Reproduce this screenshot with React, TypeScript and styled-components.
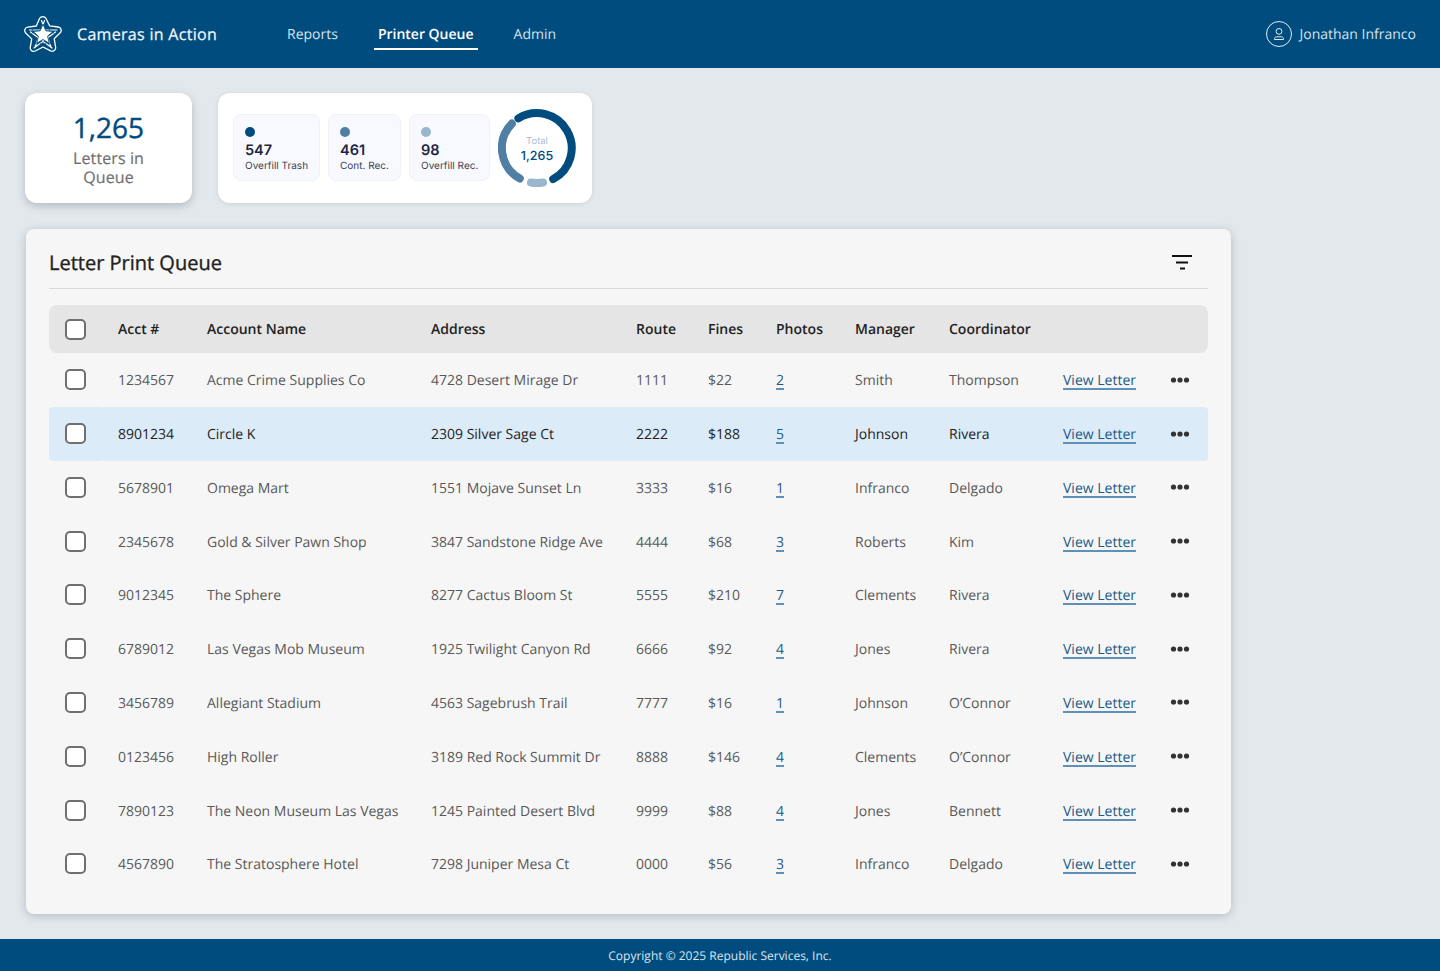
import React from "react";
import styled, { createGlobalStyle } from "styled-components";

const Global = createGlobalStyle`
  html, body { margin: 0; padding: 0; }
  body {
    background: #e3e8ec;
    font-family: "Open Sans", "Liberation Sans", sans-serif;
    color: #222;
    text-rendering: geometricPrecision;
  }
  * { box-sizing: border-box; }
`;

const Page = styled.div`
  display: flex;
  flex-direction: column;
  min-height: 100vh;
`;

const NavBar = styled.header`
  height: 68px;
  background: #004c7e;
  display: flex;
  align-items: center;
  padding: 0 24px;
  color: #fff;
`;

const Brand = styled.div`
  display: flex;
  align-items: center;
  gap: 15px;
  width: 259px;
  font-size: 16px;
  font-weight: 400;
  letter-spacing: 0.3px;
  -webkit-text-stroke: 0.25px #f1f5f8;
  color: #f1f5f8;
`;

const Tabs = styled.nav`
  display: flex;
  align-items: center;
  gap: 32px;
  height: 68px;
  flex: 1;
`;

const Tab = styled.a<{ $active?: boolean }>`
  height: 31px;
  padding: 2px 4px 0;
  margin-top: 1px;
  display: flex;
  align-items: center;
  font-size: 14px;
  font-weight: ${(p) => (p.$active ? 600 : 400)};
  color: ${(p) => (p.$active ? "#fff" : "#d5e2ec")};
  border-bottom: 2px solid ${(p) => (p.$active ? "#fff" : "transparent")};
`;

const UserBox = styled.div`
  display: flex;
  align-items: center;
  gap: 7px;
  font-size: 14px;
  color: #d5e2ec;
`;

const Main = styled.main`
  flex: 1;
  padding: 25px 0 25px 25px;
  display: flex;
  flex-direction: column;
  gap: 26px;
`;

const StatsRow = styled.section`
  display: flex;
  gap: 26px;
  align-items: stretch;
  height: 110px;
`;

const KpiCard = styled.div`
  width: 167px;
  background: #fff;
  border-radius: 12px;
  box-shadow: 0 3px 9px rgba(40, 60, 80, 0.26);
  display: flex;
  flex-direction: column;
  align-items: center;
  justify-content: center;
  text-align: center;
  padding-bottom: 2px;
`;

const KpiValue = styled.div`
  font-size: 28px;
  line-height: 34px;
  font-weight: 400;
  -webkit-text-stroke: 0.4px #004c7e;
  color: #004c7e;
`;

const KpiLabel = styled.div`
  width: 90px;
  font-size: 16px;
  line-height: 19px;
  margin-top: 4px;
  margin-bottom: -3px;
  letter-spacing: 0.1px;
  -webkit-text-stroke: 0.2px #717171;
  color: #717171;
`;

const DonutCard = styled.div`
  width: 374px;
  background: #fff;
  border-radius: 12px;
  box-shadow: 0 1px 4px rgba(40, 60, 80, 0.12);
  display: flex;
  align-items: center;
  gap: 8px;
  padding: 0 15px;
  font-family: Inter, "Liberation Sans", sans-serif;
`;

const MiniCard = styled.div<{ $width: number }>`
  width: ${(p) => p.$width}px;
  height: 67px;
  margin-bottom: 1px;
  background: #f8f9fe;
  border: 1px solid #f0f2f8;
  border-radius: 8px;
  padding: 12px 0 0 11px;
`;

const Dot = styled.div<{ $color: string }>`
  width: 10px;
  height: 10px;
  border-radius: 50%;
  background: ${(p) => p.$color};
`;

const MiniValue = styled.div`
  font-size: 14.5px;
  line-height: 18px;
  margin-top: 5px;
  margin-bottom: -1px;
  font-weight: 600;
  color: #1e2640;
`;

const MiniLabel = styled.div`
  font-size: 10px;
  line-height: 14px;
  color: #3b4254;
  white-space: nowrap;
`;

const DonutWrap = styled.div`
  position: relative;
  width: 78px;
  height: 78px;
`;

const DonutCenter = styled.div`
  position: absolute;
  inset: 0;
  display: flex;
  flex-direction: column;
  align-items: center;
  justify-content: center;
  padding-top: 5px;
`;

const DonutCaption = styled.div`
  font-size: 9.5px;
  line-height: 12px;
  margin-bottom: 1px;
  color: #a9c0d3;
`;

const DonutTotal = styled.div`
  font-size: 12.5px;
  line-height: 16px;
  font-weight: 500;
  color: #004c7e;
`;

const TableCard = styled.section`
  width: 1205px;
  margin-left: 1px;
  height: 685px;
  background: #f6f6f6;
  border-radius: 8px;
  box-shadow: 0 2px 10px rgba(40, 60, 80, 0.26);
  padding: 0 23px;
`;

const TitleBar = styled.div`
  height: 60px;
  display: flex;
  align-items: center;
  justify-content: space-between;
  border-bottom: 1px solid #d9d9d9;
  padding: 8px 16px 0 0;
  margin-bottom: 16px;
`;

const Title = styled.h2`
  margin: 0;
  font-size: 20px;
  font-weight: 400;
  -webkit-text-stroke: 0.35px #222;
  color: #222;
`;

const cols = "16px 89px 224px 205px 72px 68px 79px 94px 114px 107px 1fr";

const HeaderRow = styled.div`
  height: 48px;
  background: #e5e5e5;
  border-radius: 8px;
  display: flex;
`;

const Row = styled.div`
  height: 53.78px;
  display: flex;
`;

const CheckCell = styled.div<{ $hl?: boolean }>`
  width: 53px;
  display: flex;
  align-items: center;
  justify-content: flex-end;
  padding-right: 16px;
  background: ${(p) => (p.$hl ? "#dcebf8" : "transparent")};
  border-radius: 4px 2px 2px 4px;
`;

const Cells = styled.div<{ $hl?: boolean }>`
  flex: 1;
  display: grid;
  grid-template-columns: ${cols};
  align-items: center;
  padding-top: 2px;
  background: ${(p) => (p.$hl ? "#dcebf8" : "transparent")};
  border-radius: 2px 4px 4px 2px;
  font-size: 14px;
  color: ${(p) => (p.$hl ? "#222" : "#595959")};
  white-space: nowrap;
`;

const HeadCells = styled(Cells)`
  padding-top: 0;
  font-weight: 600;
  color: #222;
`;

const Box = styled.span`
  width: 21px;
  height: 21px;
  border: 2px solid #6f6f6f;
  border-radius: 5px;
  background: #fff;
  display: block;
`;

const LinkText = styled.a`
  color: #1b5a88;
  text-decoration: underline;
  text-decoration-color: #5f90b8;
  text-decoration-thickness: 1.5px;
  text-underline-offset: 2.5px;
`;

const DotsCell = styled.span`
  display: flex;
  margin-top: -2px;
`;

const Footer = styled.footer`
  height: 32px;
  background: #004c7e;
  color: #dce6ee;
  font-size: 12px;
  display: flex;
  align-items: center;
  justify-content: center;
`;

const rows = [
  ["1234567", "Acme Crime Supplies Co", "4728 Desert Mirage Dr", "1111", "$22", "2", "Smith", "Thompson"],
  ["8901234", "Circle K", "2309 Silver Sage Ct", "2222", "$188", "5", "Johnson", "Rivera"],
  ["5678901", "Omega Mart", "1551 Mojave Sunset Ln", "3333", "$16", "1", "Infranco", "Delgado"],
  ["2345678", "Gold & Silver Pawn Shop", "3847 Sandstone Ridge Ave", "4444", "$68", "3", "Roberts", "Kim"],
  ["9012345", "The Sphere", "8277 Cactus Bloom St", "5555", "$210", "7", "Clements", "Rivera"],
  ["6789012", "Las Vegas Mob Museum", "1925 Twilight Canyon Rd", "6666", "$92", "4", "Jones", "Rivera"],
  ["3456789", "Allegiant Stadium", "4563 Sagebrush Trail", "7777", "$16", "1", "Johnson", "O’Connor"],
  ["0123456", "High Roller", "3189 Red Rock Summit Dr", "8888", "$146", "4", "Clements", "O’Connor"],
  ["7890123", "The Neon Museum Las Vegas", "1245 Painted Desert Blvd", "9999", "$88", "4", "Jones", "Bennett"],
  ["4567890", "The Stratosphere Hotel", "7298 Juniper Mesa Ct", "0000", "$56", "3", "Infranco", "Delgado"],
];

const heads = ["Acct #", "Account Name", "Address", "Route", "Fines", "Photos", "Manager", "Coordinator"];

const Logo = () => (
  <svg width="38" height="38" viewBox="0 0 38 38" fill="none">
    <path
      d="M15.5 3.5c1.5-2.6 5-2.6 6.5 0l3.6 7.3 8.6 1.2c3 .5 3.9 3.7 2 5.8l-6 5.9 1.4 8.3c.5 3-2.4 5-5 3.8L19 32l-7.7 4c-2.6 1.2-5.5-.8-5-3.8l1.4-8.3-6-5.9c-1.9-2.1-1-5.3 2-5.8l8.6-1.2z"
      stroke="#fff"
      strokeWidth="1.3"
      strokeLinejoin="round"
    />
    <path
      d="M17.5 5.5 27 32M10 33 31.5 17M33 15H5.5M28 33 6.5 17M20.5 5.5 11 32"
      stroke="#fff"
      strokeWidth="1.2"
      strokeLinecap="round"
      strokeDasharray="7 1.5"
    />
    <path
      d="M19 8l3.2 7.4 8 .7-6.1 5.3 1.9 7.9-7-4.2-7 4.2 1.9-7.9-6.1-5.3 8-.7z"
      fill="#fff"
      stroke="#004c7e"
      strokeWidth="1"
      transform="translate(1.9 1.95) scale(0.9)"
    />
  </svg>
);

const UserIcon = () => (
  <svg width="26" height="26" viewBox="0 0 26 26" fill="none" stroke="#e4edf3" strokeWidth="1">
    <circle cx="13" cy="13" r="12.5" />
    <circle cx="13" cy="10.4" r="2.9" />
    <path d="M8.5 18.5v-.8c0-1 .9-1.9 2-1.9h5c1.1 0 2 .9 2 1.9v.8z" strokeLinejoin="round" />
  </svg>
);

const FilterIcon = () => (
  <svg width="20" height="16" viewBox="0 0 20 16" fill="#111">
    <rect x="0" y="0" width="20" height="2" />
    <rect x="4" y="6.5" width="12" height="2" />
    <rect x="8" y="12.5" width="5" height="2" />
  </svg>
);

const DotsIcon = () => (
  <svg width="20" height="6" viewBox="0 0 20 6" fill="#333">
    <circle cx="3.5" cy="3" r="2.6" />
    <circle cx="10" cy="3" r="2.6" />
    <circle cx="16.5" cy="3" r="2.6" />
  </svg>
);

const Donut = () => (
  <svg width="78" height="78" viewBox="0 0 78 78" fill="none" strokeWidth="8" strokeLinecap="round">
    <path d="M20.4 9.3A35 35 0 1 1 55.2 70" stroke="#004c7e" />
    <path d="M21.8 69.6A35 35 0 0 1 13.9 14.6" stroke="#4f7fa3" />
    <path d="M45 73.5A35 35 0 0 1 33 73.5" stroke="#99b7cc" />
  </svg>
);

export default function App() {
  return (
    <Page>
      <Global />
      <NavBar>
        <Brand>
          <Logo />
          Cameras in Action
        </Brand>
        <Tabs>
          <Tab>Reports</Tab>
          <Tab $active>Printer Queue</Tab>
          <Tab>Admin</Tab>
        </Tabs>
        <UserBox>
          <UserIcon />
          Jonathan Infranco
        </UserBox>
      </NavBar>
      <Main>
        <StatsRow>
          <KpiCard>
            <KpiValue>1,265</KpiValue>
            <KpiLabel>Letters in Queue</KpiLabel>
          </KpiCard>
          <DonutCard>
            <MiniCard $width={87}>
              <Dot $color="#004c7e" />
              <MiniValue>547</MiniValue>
              <MiniLabel>Overfill Trash</MiniLabel>
            </MiniCard>
            <MiniCard $width={73}>
              <Dot $color="#4f7fa3" />
              <MiniValue>461</MiniValue>
              <MiniLabel>Cont. Rec.</MiniLabel>
            </MiniCard>
            <MiniCard $width={81}>
              <Dot $color="#99b7cc" />
              <MiniValue>98</MiniValue>
              <MiniLabel>Overfill Rec.</MiniLabel>
            </MiniCard>
            <DonutWrap>
              <Donut />
              <DonutCenter>
                <DonutCaption>Total</DonutCaption>
                <DonutTotal>1,265</DonutTotal>
              </DonutCenter>
            </DonutWrap>
          </DonutCard>
        </StatsRow>
        <TableCard>
          <TitleBar>
            <Title>Letter Print Queue</Title>
            <FilterIcon />
          </TitleBar>
          <HeaderRow>
            <CheckCell>
              <Box />
            </CheckCell>
            <HeadCells>
              <span />
              {heads.map((h) => (
                <span key={h}>{h}</span>
              ))}
            </HeadCells>
          </HeaderRow>
          {rows.map((r, i) => (
            <Row key={r[0]}>
              <CheckCell $hl={i === 1}>
                <Box />
              </CheckCell>
              <Cells $hl={i === 1}>
                <span />
                <span>{r[0]}</span>
                <span>{r[1]}</span>
                <span>{r[2]}</span>
                <span>{r[3]}</span>
                <span>{r[4]}</span>
                <span>
                  <LinkText>{r[5]}</LinkText>
                </span>
                <span>{r[6]}</span>
                <span>{r[7]}</span>
                <span>
                  <LinkText>View Letter</LinkText>
                </span>
                <DotsCell>
                  <DotsIcon />
                </DotsCell>
              </Cells>
            </Row>
          ))}
        </TableCard>
      </Main>
      <Footer>Copyright © 2025 Republic Services, Inc.</Footer>
    </Page>
  );
}
